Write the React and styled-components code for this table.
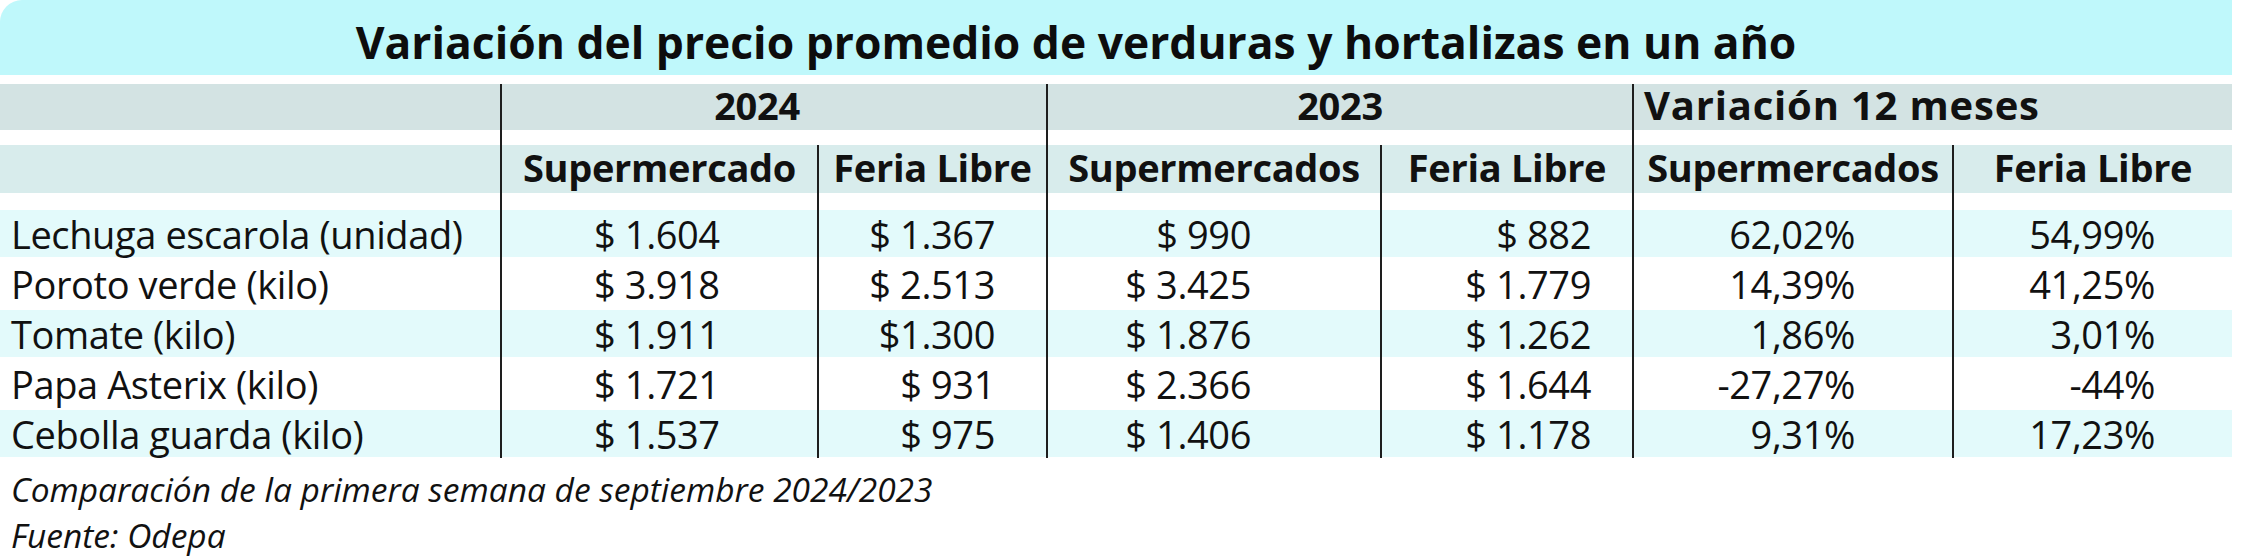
import React from 'react';
import styled, { createGlobalStyle } from 'styled-components';

const GlobalStyle = createGlobalStyle`
  html, body {
    margin: 0;
    padding: 0;
    background: #fff;
  }
  body {
    font-family: 'Open Sans', 'Liberation Sans', sans-serif;
    color: #111;
  }
`;

const COLUMNS = '500px 317px 229px 334px 252px 320px 280px';

const products = [
  { name: 'Lechuga escarola (unidad)', values: ['$ 1.604', '$ 1.367', '$ 990', '$ 882', '62,02%', '54,99%'] },
  { name: 'Poroto verde (kilo)', values: ['$ 3.918', '$ 2.513', '$ 3.425', '$ 1.779', '14,39%', '41,25%'] },
  { name: 'Tomate (kilo)', values: ['$ 1.911', '$1.300', '$ 1.876', '$ 1.262', '1,86%', '3,01%'] },
  { name: 'Papa Asterix (kilo)', values: ['$ 1.721', '$ 931', '$ 2.366', '$ 1.644', '-27,27%', '-44%'] },
  { name: 'Cebolla guarda (kilo)', values: ['$ 1.537', '$ 975', '$ 1.406', '$ 1.178', '9,31%', '17,23%'] },
];

// how each value column sits inside its cell
const valueCols = [
  { justify: 'flex-start', pl: 92, pr: 0 },
  { justify: 'flex-end', pl: 0, pr: 51 },
  { justify: 'flex-end', pl: 0, pr: 129 },
  { justify: 'flex-end', pl: 0, pr: 41 },
  { justify: 'flex-end', pl: 0, pr: 97 },
  { justify: 'flex-end', pl: 0, pr: 77 },
];

const subHeads = ['Supermercado', 'Feria Libre', 'Supermercados', 'Feria Libre', 'Supermercados', 'Feria Libre'];

const Sheet = styled.div`
  width: 2232px;
`;

const TitleBand = styled.h1`
  margin: 0;
  box-sizing: border-box;
  height: 75px;
  padding: 20px 80px 0 0;
  display: flex;
  justify-content: center;
  background: #bff8fb;
  border-top-left-radius: 22px;
  font-size: 44.4px;
  font-weight: 700;
  line-height: 1;
  color: #0d0d0d;
  white-space: nowrap;
`;

const Row = styled.div`
  display: grid;
  grid-template-columns: ${COLUMNS};
  box-sizing: border-box;
  height: ${(p) => p.$h}px;
  margin-top: ${(p) => p.$mt || 0}px;
  background: linear-gradient(
    to bottom,
    #fff ${(p) => p.$top || 0}px,
    ${(p) => p.$bg} ${(p) => p.$top || 0}px,
    ${(p) => p.$bg} calc(100% - ${(p) => p.$bottom || 0}px),
    #fff calc(100% - ${(p) => p.$bottom || 0}px)
  );
  font-size: 38px;
  line-height: 1;
  font-weight: ${(p) => (p.$head ? 700 : 400)};
  letter-spacing: ${(p) => (p.$head ? '-0.3px' : '-0.4px')};
  white-space: nowrap;
`;

const Cell = styled.div`
  display: flex;
  align-items: flex-start;
  justify-content: ${(p) => p.$justify || 'center'};
  box-sizing: border-box;
  grid-column: span ${(p) => p.$span || 1};
  padding: ${(p) => p.$pt}px ${(p) => p.$pr || 0}px 0 ${(p) => p.$pl || 0}px;
  border-left: ${(p) => (p.$line ? '2px solid #1e1e1e' : 'none')};
`;

const WideHead = styled(Cell)`
  font-size: 40px;
  letter-spacing: 0.8px;
`;

const Notes = styled.div`
  padding: 8px 0 0 11px;
  font-size: 33.5px;
  font-style: italic;
  line-height: 46px;
  color: #111;
`;

export default function App() {
  return (
    <>
      <GlobalStyle />
      <Sheet>
        <TitleBand>Variación del precio promedio de verduras y hortalizas en un año</TitleBand>

        <Row $head $h={61} $mt={9} $bg="#d3e3e3" $bottom={15}>
          <Cell $pt={2} />
          <Cell $pt={2} $span={2} $line $pr={34}>
            2024
          </Cell>
          <Cell $pt={2} $span={2} $line>
            2023
          </Cell>
          <WideHead $pt={1} $span={2} $line $justify="flex-start" $pl={10}>
            Variación 12 meses
          </WideHead>
        </Row>

        <Row $head $h={63} $bg="#d8ecec" $bottom={15}>
          <Cell $pt={3} />
          {subHeads.map((h, i) => (
            <Cell key={i} $pt={3} $line>
              {h}
            </Cell>
          ))}
        </Row>

        {products.map((p, r) => (
          <Row key={p.name} $h={50} $top={2} $bottom={1} $bg={r % 2 === 0 ? '#e3fafb' : '#fff'}>
            <Cell $pt={7} $justify="flex-start" $pl={11}>
              {p.name}
            </Cell>
            {p.values.map((v, i) => (
              <Cell
                key={i}
                $pt={7}
                $line
                $justify={valueCols[i].justify}
                $pl={valueCols[i].pl}
                $pr={valueCols[i].pr}
              >
                {v}
              </Cell>
            ))}
          </Row>
        ))}

        <Notes>
          Comparación de la primera semana de septiembre 2024/2023
          <br />
          Fuente: Odepa
        </Notes>
      </Sheet>
    </>
  );
}
